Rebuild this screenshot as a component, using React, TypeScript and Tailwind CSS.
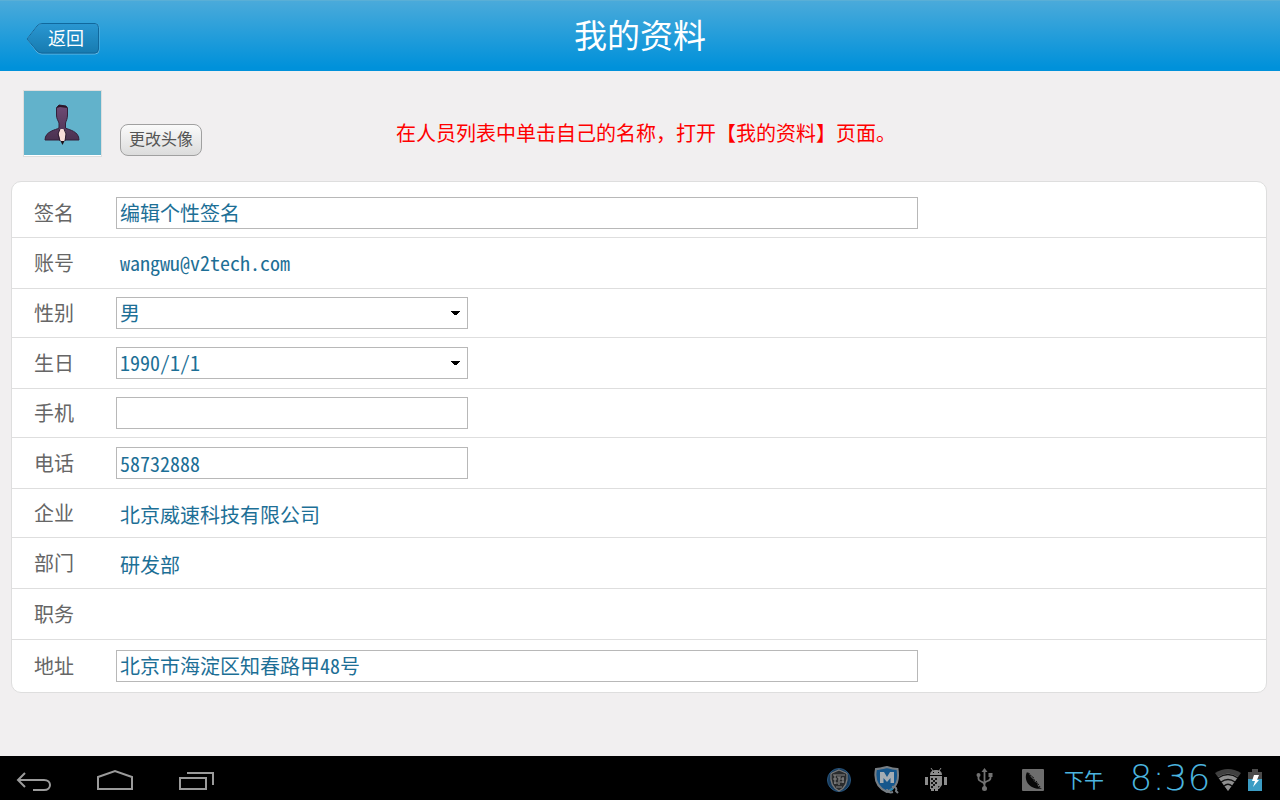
import type { ReactNode } from "react";

const fieldBox = "h-8 border border-[#b8b8b8] bg-white text-[#1d6f96]";

const cjk = "font-['Noto_Sans_CJK_SC',sans-serif]";
const mono = "font-['Noto_Sans_Mono_CJK_SC','Noto_Sans_CJK_SC',monospace]";

function Row({ label, id, className, children }: { label: string; id?: string; className: string; children?: ReactNode }) {
  return (
    <div className={`flex items-center pl-[22px] pr-4 ${className}`}>
      {id ? (
        <label htmlFor={id} className="w-[82px] shrink-0 text-[20px] leading-6 text-[#666]">
          {label}
        </label>
      ) : (
        <span className="w-[82px] shrink-0 text-[20px] leading-6 text-[#666]">{label}</span>
      )}
      {children}
    </div>
  );
}

function Select({ id, value, className }: { id: string; value: string; className: string }) {
  return (
    <div className="relative w-[352px]">
      <select id={id} className={`block w-full appearance-none rounded-none pl-[3px] pr-8 text-[20px] ${fieldBox} ${className}`}>
        <option>{value}</option>
      </select>
      <svg className="pointer-events-none absolute right-2 top-[14px]" width="9" height="4" viewBox="0 0 9 4" shapeRendering="crispEdges">
        <path d="M0 0H9V1H8V2H7V3H6V4H3V3H2V2H1V1H0Z" fill="#000" />
      </svg>
    </div>
  );
}

function Value({ className, children }: { className: string; children: ReactNode }) {
  return <span className={`pl-1 text-[20px] leading-6 text-[#1d6f96] ${className}`}>{children}</span>;
}

function Avatar() {
  return (
    <svg width="79" height="67" viewBox="0 0 79 67" role="img" aria-label="头像">
      <defs>
        <linearGradient id="suit" x1="0" y1="0" x2="0" y2="1">
          <stop offset="0" stopColor="#6f4b75" />
          <stop offset="1" stopColor="#4a3150" />
        </linearGradient>
      </defs>
      <rect x="0.5" y="0.5" width="78" height="66" fill="#fff" stroke="#dedede" />
      <rect x="1" y="1" width="77" height="64" fill="#62b2cb" />
      <path
        d="M34 17 36 15 43 16 44.500 18 44.500 25C44.500 29 43 31 42.500 33V38C46 40 56 41 56 50H22C22 41 33 40 36 38V33C35 30 33.500 29 33.500 25V18Z"
        fill="url(#suit)"
        stroke="#33203a"
        strokeWidth="1"
      />
      <path d="M33.500 18 36 15 43 16 44.500 18 37 17Z" fill="#2b1626" />
      <path d="M37 39H41L43 43 42 50 39.500 53 37 50 35.500 43Z" fill="#f8dcd9" />
      <path d="M37.500 51H41.500L39.500 55Z" fill="#1c1018" />
      <path d="M37 39 35 44 37 51M41 39 43 44 42 51" stroke="#2d1b2f" fill="none" />
    </svg>
  );
}

function NavIcon({ label, width, path }: { label: string; width: number; path: string }) {
  return (
    <button type="button" aria-label={label} className="block">
      <svg width={width} height="24" viewBox={`0 0 ${width} 24`} fill="none" stroke="#9b9b9b" strokeWidth="2">
        <path d={path} />
      </svg>
    </button>
  );
}

function StatusIcons() {
  return (
    <div className="flex items-center">
      <svg className="mr-[22px]" width="26" height="26" viewBox="0 0 26 26">
        <circle cx="13" cy="13" r="11.500" fill="#173b5c" stroke="#28557e" />
        <path d="M13 3 20 6 21 7C22 16 19 21 13 24 7 21 4 16 5 7L6 6Z" fill="#292b2d" stroke="#777" strokeWidth="1.300" />
        <path d="M7 8H19M7 12H11M9 8V17M8 16H12M13 10V18M17 10V16M13 12H18M14 15H18M10 20H16M11 10H15" stroke="#858585" strokeWidth="1.200" fill="none" />
      </svg>
      <svg className="mr-[25px]" width="26" height="30" viewBox="0 0 26 30">
        <path d="M13 2C9 3 5 4 2 4 0 14 2 22 13 27 24 22 25 14 23.500 4 20 4 16 3 13 2Z" fill="#16578c" stroke="#777e84" strokeWidth="2" />
        <path d="M6 18V7H10L13 12 16 7H20V18H16.500V13L13 17 9.500 13V18Z" fill="#a5adb3" />
        <path d="M13 24C13 27 16 28 19 27M18 22C22 21 23 24 22 26L24 28" fill="none" stroke="#777e84" strokeWidth="2" />
        <path d="M16 25 19 24" stroke="#2685b3" strokeWidth="2" />
      </svg>
      <svg className="mr-[29px]" width="22" height="24" viewBox="0 0 22 24" fill="#8c8c8c">
        <path d="M5 7C5 3 8 2 11 2S17 3 17 7Z" />
        <path d="M6 0 8 3M16 0 14 3" stroke="#8c8c8c" />
        <path d="M0 9H3V17H0ZM19 9H22V17H19ZM5 8H17V17L14 21H13V23H10V21H9V23H6V21H5Z" />
        <path d="M8 4H9V5H8ZM13 4H14V5H13Z" fill="#000" />
        <path d="M6 10H8V12H6ZM10 10H12V12H10ZM8 12H10V14H8ZM6 14H8V16H6ZM10 14H12V16H10ZM8 16H10V18H8ZM6 18H8V20H6Z" fill="#151515" />
        <path d="M13 18H15L13 20Z" fill="#222" />
      </svg>
      <svg className="mr-[29px]" width="17" height="24" viewBox="0 0 17 24" fill="none" stroke="#727272" strokeWidth="1.800">
        <path d="M8.500 3V21M2.500 8V11C2.500 14 8.500 13 8.500 17M14.500 8V10C14.500 14 8.500 12 8.500 16" />
        <path d="M5.500 4 8.500 0 11.500 4Z" fill="#727272" stroke="none" />
        <circle cx="2.500" cy="7" r="2" fill="#727272" stroke="none" />
        <path d="M12.500 5H16.500V9H12.500Z" fill="#727272" stroke="none" />
        <circle cx="8.500" cy="20.500" r="2.500" fill="#727272" stroke="none" />
      </svg>
      <svg className="mr-[20px]" width="22" height="22" viewBox="0 0 22 22">
        <rect width="22" height="22" rx="1" fill="#6d6d6d" />
        <path d="M5 3C2.500 8 4 14 9 17.500 13 20 17 20 20 19.500 18 19 17 18 16 17L15 14 12 12 11 10 9 8 7 5Z" fill="#080808" />
        <path d="M6 4 8 5 9 7 11 8 12 11 14 12 16 15 18 18" fill="none" stroke="#080808" strokeWidth="1" strokeDasharray="2 1" />
      </svg>
      <span className="mr-[25px] text-[20px] leading-6 text-[#4bb4df]">下午</span>
      <time className="mr-1 w-[82px] pb-1 text-center font-['DejaVu_Sans',sans-serif] text-[36px] font-extralight leading-9 text-[#4bb4df]">
        8:36
      </time>
      <svg className="mr-[7px]" width="26" height="23" viewBox="0 0 26 23">
        <path d="M0 4Q13-4 26 4L13 22Z" fill="#414141" />
        <path d="M3 8Q13 1 23 8L13 22Z" fill="#8f8f8f" />
        <path d="M3 9Q13 2 23 9M6 13Q13 8 20 13M9 17Q13 13.500 17 17" fill="none" stroke="#101010" strokeWidth="1.400" />
      </svg>
      <svg width="14" height="23" viewBox="0 0 14 23">
        <path d="M4 0H10V3H14V11H0V3H4Z" fill="#4b4b4b" />
        <path d="M0 10H14V22H0Z" fill="#3b9cc4" />
        <path d="M6 6H11L9 11H11L5 18 7 12H4Z" fill="#fff" />
      </svg>
    </div>
  );
}

export default function App() {
  return (
    <div className={`flex min-h-screen flex-col bg-[#f1eff0] ${cjk}`}>
      <header className="grid h-[71px] grid-cols-[1fr_auto_1fr] items-center border-t border-[#5aafd6] bg-linear-to-b/srgb from-[#4aaada] to-[#0091da] to-95%">
        <button type="button" className="relative ml-[26px] mt-[6px] h-8 w-[74px] justify-self-start pl-1 text-[18px] leading-7 text-white">
          <svg className="absolute inset-0" width="74" height="32" viewBox="0 0 74 32">
            <defs>
              <linearGradient id="back" x1="0" y1="0" x2="0" y2="1">
                <stop offset="0" stopColor="#2a97d2" />
                <stop offset="1" stopColor="#167aaf" />
              </linearGradient>
            </defs>
            <path d="M1 16 11 3Q13 .5 16 .5H69Q73 .5 73 4.500V27Q73 31 69 31H16Q13 31 11 29Z" fill="url(#back)" stroke="#65b8e2" />
            <path d="M1 16 11 3Q13 .5 16 .5H69Q72.500 .5 72.500 4.500V26Q72.500 30 69 30H16Q13 30 11 28Z" fill="none" stroke="#10689d" />
          </svg>
          <span className="relative block pb-1 pl-0.5">返回</span>
        </button>
        <h1 className="pb-1 text-[33px] leading-10 text-white">我的资料</h1>
      </header>

      <main className="flex-1 pb-8 pl-[11px] pr-[13px] pt-[19px]">
        <div className="flex h-[91px] items-start pl-3">
          <Avatar />
          <button
            type="button"
            className="ml-[18px] mt-[34px] h-8 w-[82px] rounded-lg border border-[#a0a0a0] bg-linear-to-b from-[#fafafa] to-[#dcdcdc] pb-1 text-[16px] leading-6 text-[#555]"
          >
            更改头像
          </button>
          <p className="ml-[194px] mt-[31px] text-[20px] leading-6 text-[#ff0000]">
            {"在人员列表中单击自己的名称\uff0c打开【我的资料】页面。"}
          </p>
        </div>

        <form className="divide-y divide-[#dedede] rounded-[10px] border border-[#dedede] bg-white">
          <Row label="签名" id="signature" className="h-14 pt-[7px]">
            <input id="signature" defaultValue="编辑个性签名" className={`w-[802px] px-[3px] pb-0.5 text-[20px] ${fieldBox}`} />
          </Row>
          <Row label="账号" className="h-[51px]">
            <Value className={mono}>wangwu@v2tech.com</Value>
          </Row>
          <Row label="性别" id="gender" className="h-[49px]">
            <Select id="gender" value="男" className="" />
          </Row>
          <Row label="生日" id="birthday" className="h-[51px]">
            <Select id="birthday" value="1990/1/1" className={mono} />
          </Row>
          <Row label="手机" id="mobile" className="h-[49px]">
            <input id="mobile" type="tel" className={`w-[352px] px-[3px] text-[20px] ${mono} ${fieldBox}`} />
          </Row>
          <Row label="电话" id="phone" className="h-[51px]">
            <input id="phone" type="tel" defaultValue="58732888" className={`w-[352px] px-[3px] text-[20px] ${mono} ${fieldBox}`} />
          </Row>
          <Row label="企业" className="h-[49px]">
            <Value className="pt-1">北京威速科技有限公司</Value>
          </Row>
          <Row label="部门" className="h-[51px]">
            <Value className="pt-1">研发部</Value>
          </Row>
          <Row label="职务" className="h-[51px]" />
          <Row label="地址" id="address" className="h-[52px]">
            <input id="address" defaultValue="北京市海淀区知春路甲48号" className={`w-[802px] px-[3px] pb-0.5 text-[20px] ${mono} ${fieldBox}`} />
          </Row>
        </form>
      </main>

      <footer className="flex h-11 items-center justify-between bg-black pl-4 pr-[18px]">
        <nav className="flex items-center gap-[44px] pt-[6px]">
          <NavIcon label="返回上一页" width={36} path="M9 4 2 11 9 18M2 11H28C36 11 36 21 28 21H17" />
          <NavIcon label="主屏幕" width={38} path="M2 20V8L19 2 36 8V20Z" />
          <NavIcon label="最近任务" width={38} path="M2 9H28V20H2ZM9 4H35V16" />
        </nav>
        <div className="pt-1">
          <StatusIcons />
        </div>
      </footer>
    </div>
  );
}
